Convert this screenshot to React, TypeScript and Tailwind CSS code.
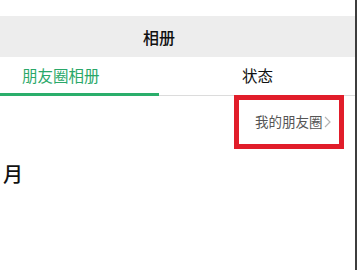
export default function App() {
  return (
    <div
      className="flex w-[357px] h-[274px] bg-white overflow-hidden"
      style={{ fontFamily: '"Noto Sans CJK SC", "Noto Sans", sans-serif' }}
    >
      <div className="flex-1 flex flex-col">
        {/* top strip */}
        <div className="h-[16px] bg-white" />

        {/* title bar */}
        <div className="h-[41px] bg-[#ededed] flex items-center justify-center pr-[37px]">
          <span className="text-[16px] font-medium text-[#111] leading-none">相册</span>
        </div>

        {/* tabs */}
        <div className="h-[39px] flex border-b border-[#dcdcdc]">
          <div className="w-[159px] relative flex items-center pl-[22px]">
            <span className="text-[15.5px] text-[#2aa869] leading-none">朋友圈相册</span>
            <div className="absolute left-0 right-0 bottom-[-1px] h-[3px] bg-[#2aae6b]" />
          </div>
          <div className="flex-1 flex items-center pl-[83px]">
            <span className="text-[15.5px] text-[#111] leading-none">状态</span>
          </div>
        </div>

        {/* my moments link */}
        <div className="flex justify-end pr-[11px] -mt-[1px]">
          <div className="w-[110px] h-[54px] border-[5px] border-[#e11d2a] flex items-center pl-[16px]">
            <span className="text-[13.5px] text-[#555] leading-none">我的朋友圈</span>
            <svg width="7" height="12" viewBox="0 0 7 12" className="ml-[1px]">
              <path d="M1 1l5 5-5 5" fill="none" stroke="#b5b5b5" strokeWidth="1.2" />
            </svg>
          </div>
        </div>

        {/* month */}
        <div className="pl-[3px] pt-[14px]">
          <span className="text-[20px] font-medium text-[#111] leading-none">月</span>
        </div>
      </div>

      {/* right edge */}
      <div className="w-[2px] h-[270px] bg-[#3d3d3d]" />
    </div>
  )
}
